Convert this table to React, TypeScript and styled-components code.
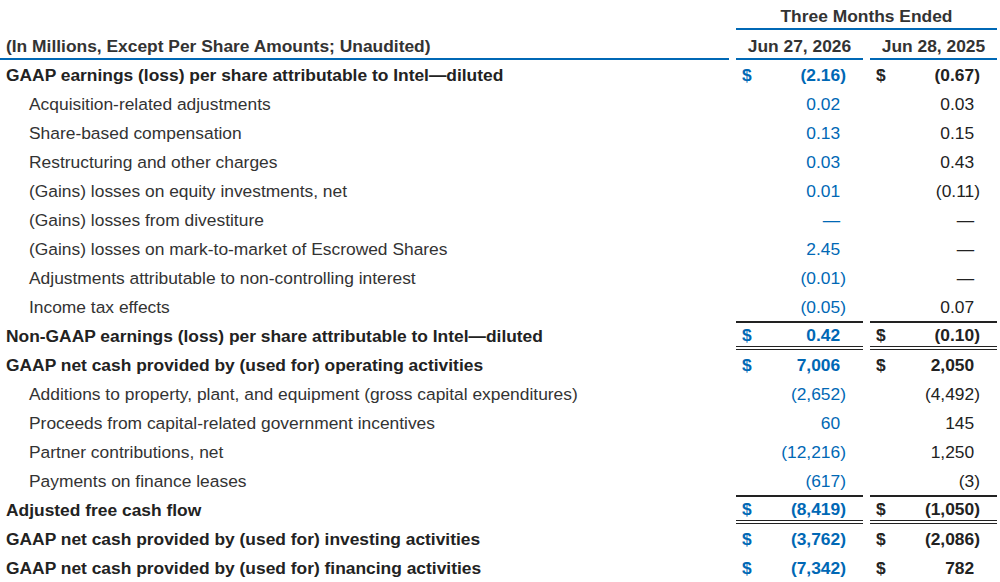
import React from "react";
import styled, { createGlobalStyle } from "styled-components";

const BLUE = "#0068b5";
const INK = "#222222";

const Global = createGlobalStyle`
  html, body { margin: 0; padding: 0; background: #ffffff; }
  body { font-family: "Liberation Sans", Arial, sans-serif; color: ${INK}; }
`;

const Table = styled.div`
  display: grid;
  grid-template-columns: 729px 127px 127px;
  column-gap: 7px;
  width: 1000px;
  font-size: 17.4px;
`;

const Super = styled.div`
  grid-column: 2 / 4;
  height: 30px;
  box-sizing: border-box;
  border-bottom: 2px solid ${BLUE};
  display: flex;
  align-items: center;
  justify-content: center;
  font-weight: bold;
  color: #333;
  padding-top: 4px;
`;

const Spacer = styled.div`
  height: 30px;
`;

const HeadCell = styled.div<{ $left?: boolean }>`
  height: 30px;
  box-sizing: border-box;
  border-bottom: 2px solid ${BLUE};
  display: flex;
  align-items: center;
  padding-top: 5px;
  justify-content: ${(p) => (p.$left ? "flex-start" : "center")};
  padding-left: ${(p) => (p.$left ? "6px" : "0")};
  font-weight: bold;
  color: #333;
`;

const Label = styled.div<{ $bold?: boolean }>`
  height: 29px;
  box-sizing: border-box;
  display: flex;
  align-items: center;
  padding-top: 2px;
  padding-left: ${(p) => (p.$bold ? "6px" : "29px")};
  font-weight: ${(p) => (p.$bold ? "bold" : "normal")};
  color: ${(p) => (p.$bold ? INK : "#333")};
  white-space: nowrap;
`;

const ValueCell = styled.div<{ $blue?: boolean; $bold?: boolean; $top?: boolean; $double?: boolean }>`
  height: 29px;
  box-sizing: border-box;
  display: flex;
  align-items: center;
  justify-content: space-between;
  padding: 2px 17px 0 6px;
  color: ${(p) => (p.$blue ? BLUE : INK)};
  font-weight: ${(p) => (p.$bold ? "bold" : "normal")};
  border-top: ${(p) => (p.$top ? `2px solid ${INK}` : "0")};
  border-bottom: ${(p) => (p.$double ? `4px double ${INK}` : "0")};
`;

const Dollar = styled.span`
  font-weight: bold;
`;

const Num = styled.span`
  white-space: nowrap;
`;

const Ghost = styled.span`
  visibility: hidden;
`;

type Row = {
  label: string;
  bold?: boolean;
  a: string;
  b: string;
  dollar?: boolean;
  top?: boolean;
  double?: boolean;
};

const rows: Row[] = [
  { label: "GAAP earnings (loss) per share attributable to Intel\u2014diluted", bold: true, a: "(2.16)", b: "(0.67)", dollar: true },
  { label: "Acquisition-related adjustments", a: "0.02", b: "0.03" },
  { label: "Share-based compensation", a: "0.13", b: "0.15" },
  { label: "Restructuring and other charges", a: "0.03", b: "0.43" },
  { label: "(Gains) losses on equity investments, net", a: "0.01", b: "(0.11)" },
  { label: "(Gains) losses from divestiture", a: "\u2014", b: "\u2014" },
  { label: "(Gains) losses on mark-to-market of Escrowed Shares", a: "2.45", b: "\u2014" },
  { label: "Adjustments attributable to non-controlling interest", a: "(0.01)", b: "\u2014" },
  { label: "Income tax effects", a: "(0.05)", b: "0.07" },
  { label: "Non-GAAP earnings (loss) per share attributable to Intel\u2014diluted", bold: true, a: "0.42", b: "(0.10)", dollar: true, top: true, double: true },
  { label: "GAAP net cash provided by (used for) operating activities", bold: true, a: "7,006", b: "2,050", dollar: true },
  { label: "Additions to property, plant, and equipment (gross capital expenditures)", a: "(2,652)", b: "(4,492)" },
  { label: "Proceeds from capital-related government incentives", a: "60", b: "145" },
  { label: "Partner contributions, net", a: "(12,216)", b: "1,250" },
  { label: "Payments on finance leases", a: "(617)", b: "(3)" },
  { label: "Adjusted free cash flow", bold: true, a: "(8,419)", b: "(1,050)", dollar: true, top: true, double: true },
  { label: "GAAP net cash provided by (used for) investing activities", bold: true, a: "(3,762)", b: "(2,086)", dollar: true },
  { label: "GAAP net cash provided by (used for) financing activities", bold: true, a: "(7,342)", b: "782", dollar: true },
];

const Value: React.FC<{ v: string }> = ({ v }) => {
  const paren = v.endsWith(")");
  return (
    <Num>
      {v}
      {!paren && <Ghost>)</Ghost>}
    </Num>
  );
};

export default function App() {
  return (
    <>
      <Global />
      <Table>
        <Spacer />
        <Super>Three Months Ended</Super>
        <HeadCell $left>(In Millions, Except Per Share Amounts; Unaudited)</HeadCell>
        <HeadCell>Jun 27, 2026</HeadCell>
        <HeadCell>Jun 28, 2025</HeadCell>
        {rows.map((r, i) => (
          <React.Fragment key={i}>
            <Label $bold={r.bold}>{r.label}</Label>
            <ValueCell $blue $bold={r.bold} $top={r.top} $double={r.double}>
              <Dollar>{r.dollar ? "$" : ""}</Dollar>
              <Value v={r.a} />
            </ValueCell>
            <ValueCell $bold={r.bold} $top={r.top} $double={r.double}>
              <Dollar>{r.dollar ? "$" : ""}</Dollar>
              <Value v={r.b} />
            </ValueCell>
          </React.Fragment>
        ))}
      </Table>
    </>
  );
}
